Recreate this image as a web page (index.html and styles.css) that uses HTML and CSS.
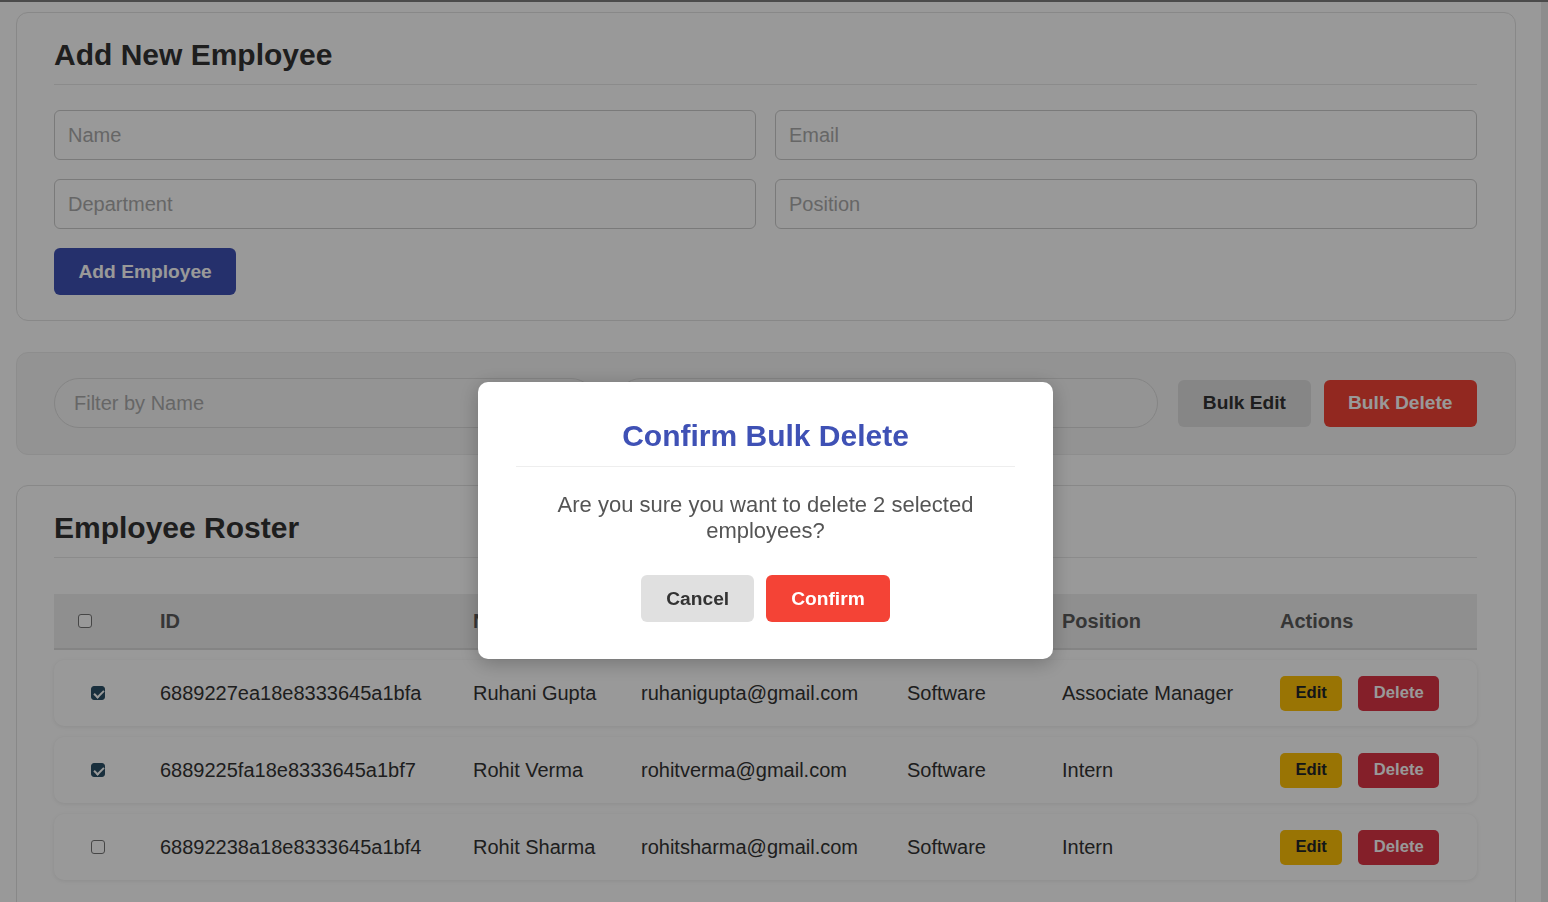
FILE: index.html
```html
<!DOCTYPE html>
<html lang="en">
<head>
<meta charset="utf-8">
<title>Employee Manager</title>
<link rel="stylesheet" href="styles.css">
</head>
<body>
<div class="topbar"></div>
<div class="shell">
  <main class="main">
    <section class="card form-card">
      <h2 class="card-title">Add New Employee</h2>
      <div class="form-grid">
        <input class="field" type="text" placeholder="Name">
        <input class="field" type="text" placeholder="Email">
        <input class="field" type="text" placeholder="Department">
        <input class="field" type="text" placeholder="Position">
      </div>
      <button class="btn btn-primary" type="button">Add Employee</button>
    </section>

    <section class="filter-card">
      <input class="pill" type="text" placeholder="Filter by Name">
      <input class="pill" type="text" placeholder="Filter by Department">
      <div class="bulk-group">
        <button class="btn btn-light" type="button">Bulk Edit</button>
        <button class="btn btn-danger" type="button">Bulk Delete</button>
      </div>
    </section>

    <section class="card roster-card">
      <h2 class="card-title">Employee Roster</h2>
      <div class="table">
        <div class="thead">
          <div class="cell cell-check-head"><input type="checkbox" class="cb"></div>
          <div class="cell">ID</div>
          <div class="cell">Name</div>
          <div class="cell">Email</div>
          <div class="cell">Department</div>
          <div class="cell">Position</div>
          <div class="cell">Actions</div>
        </div>
        <div class="trow">
          <div class="cell cell-check"><input type="checkbox" class="cb" checked></div>
          <div class="cell">6889227ea18e8333645a1bfa</div>
          <div class="cell">Ruhani Gupta</div>
          <div class="cell">ruhanigupta@gmail.com</div>
          <div class="cell">Software</div>
          <div class="cell">Associate Manager</div>
          <div class="cell actions"><button class="sbtn sbtn-edit" type="button">Edit</button><button class="sbtn sbtn-del" type="button">Delete</button></div>
        </div>
        <div class="trow">
          <div class="cell cell-check"><input type="checkbox" class="cb" checked></div>
          <div class="cell">6889225fa18e8333645a1bf7</div>
          <div class="cell">Rohit Verma</div>
          <div class="cell">rohitverma@gmail.com</div>
          <div class="cell">Software</div>
          <div class="cell">Intern</div>
          <div class="cell actions"><button class="sbtn sbtn-edit" type="button">Edit</button><button class="sbtn sbtn-del" type="button">Delete</button></div>
        </div>
        <div class="trow">
          <div class="cell cell-check"><input type="checkbox" class="cb"></div>
          <div class="cell">68892238a18e8333645a1bf4</div>
          <div class="cell">Rohit Sharma</div>
          <div class="cell">rohitsharma@gmail.com</div>
          <div class="cell">Software</div>
          <div class="cell">Intern</div>
          <div class="cell actions"><button class="sbtn sbtn-edit" type="button">Edit</button><button class="sbtn sbtn-del" type="button">Delete</button></div>
        </div>
      </div>
    </section>
  </main>
  <div class="track"></div>
</div>

<div class="overlay">
  <div class="modal">
    <h3 class="modal-title">Confirm Bulk Delete</h3>
    <p class="modal-text">Are you sure you want to delete 2 selected employees?</p>
    <div class="modal-actions">
      <button class="btn btn-cancel" type="button">Cancel</button>
      <button class="btn btn-confirm" type="button">Confirm</button>
    </div>
  </div>
</div>
</body>
</html>
```

FILE: styles.css
```css
* { box-sizing: border-box; }

html, body {
  margin: 0;
  padding: 0;
  height: 902px;
  overflow: hidden;
}

body {
  font-family: "Liberation Sans", Arial, sans-serif;
  color: #333;
  background: #ffffff;
}

.topbar {
  height: 2px;
  background: #7d7d7d;
}

.shell {
  display: flex;
  align-items: stretch;
  min-height: 900px;
}

.main {
  flex: 1;
  padding-top: 10px;
}

.track {
  width: 7px;
  background: #ececec;
}

.card {
  width: 1500px;
  margin-left: 16px;
  background: #ffffff;
  border: 1px solid #e3e3e3;
  border-radius: 12px;
  padding: 20px 38px 25px 37px;
}

.card-title {
  margin: 0 0 25px;
  font-size: 30px;
  line-height: 34px;
  font-weight: bold;
  color: #333;
  padding-top: 5px;
  padding-bottom: 12px;
  border-bottom: 1px solid #e8e8e8;
}

.form-grid {
  display: grid;
  grid-template-columns: 1fr 1fr;
  gap: 19px 19px;
  margin-bottom: 19px;
}

.field {
  height: 50px;
  border: 1px solid #cccccc;
  border-radius: 6px;
  padding: 0 13px;
  font-family: inherit;
  font-size: 20px;
  color: #333;
  background: #ffffff;
  outline: none;
}

.field::placeholder, .pill::placeholder {
  color: #ababab;
}

.btn {
  height: 47px;
  padding: 0 24.5px;
  border: none;
  border-radius: 6px;
  font-family: inherit;
  font-size: 19.2px;
  font-weight: bold;
  cursor: pointer;
}

.btn-primary {
  background: #3f51b5;
  color: #ffffff;
}

.filter-card {
  width: 1500px;
  margin: 31px 0 30px 16px;
  background: #f5f5f5;
  border: 1px solid #ececec;
  border-radius: 12px;
  padding: 25px 38px 26px 37px;
  display: flex;
  align-items: center;
  gap: 20px;
}

.pill {
  flex: 1;
  min-width: 0;
  height: 50px;
  border: 1px solid #dddddd;
  border-radius: 25px;
  padding: 0 19px;
  font-family: inherit;
  font-size: 20px;
  background: #f7f7f7;
  outline: none;
}

.bulk-group {
  display: flex;
  gap: 13px;
}

.btn-light {
  background: #e0e0e0;
  color: #333;
}

.btn-danger {
  background: #f44336;
  color: #ffffff;
}

.roster-card {
  padding-bottom: 40px;
}

.table {
  margin-top: 36px;
  display: flex;
  flex-direction: column;
  gap: 10px;
}

.thead, .trow {
  display: grid;
  grid-template-columns: 90px 313px 168px 266px 155px 218px 213px;
  align-items: center;
}

.thead {
  height: 56px;
  background: #eeeeee;
  border-bottom: 2px solid #dcdcdc;
  font-size: 20px;
  font-weight: bold;
  color: #5a5a5a;
}

.trow {
  height: 66px;
  background: #ffffff;
  border-radius: 10px;
  box-shadow: 0 1px 4px rgba(0, 0, 0, 0.08);
  font-size: 20px;
  color: #333;
}

.trow + .trow {
  margin-top: 1px;
}

.cell {
  padding-left: 16px;
  white-space: nowrap;
}

.cell-check-head {
  padding-left: 24px;
  display: flex;
  align-items: center;
}

.cell-check {
  padding-left: 0;
  padding-right: 2px;
  display: flex;
  justify-content: center;
  align-items: center;
}

.cb {
  appearance: none;
  -webkit-appearance: none;
  width: 14px;
  height: 14px;
  margin: 0;
  border: 1px solid #767676;
  border-radius: 3px;
  background: #ffffff;
  position: relative;
}

.cb:checked {
  background: #2b4f66;
  border-color: #2b4f66;
}

.cb:checked::after {
  content: "";
  position: absolute;
  left: 3.5px;
  top: 0.5px;
  width: 4px;
  height: 8px;
  border: solid #ffffff;
  border-width: 0 2px 2px 0;
  transform: rotate(45deg);
}

.actions {
  display: flex;
  gap: 16px;
  align-items: center;
}

.sbtn {
  height: 35px;
  padding: 0 15.5px;
  border: none;
  border-radius: 5px;
  font-family: inherit;
  font-size: 16.6px;
  font-weight: bold;
}

.sbtn-edit {
  background: #ffc107;
  color: #212529;
}

.sbtn-del {
  background: #dc3545;
  color: #ffffff;
}

.overlay {
  position: fixed;
  inset: 0;
  background: rgba(0, 0, 0, 0.4);
  display: flex;
  justify-content: center;
  align-items: flex-start;
  padding-top: 382px;
  padding-right: 17px;
}

.modal {
  width: 575px;
  background: #ffffff;
  border-radius: 10px;
  padding: 37px 38px 37px;
  box-shadow: 0 4px 20px rgba(0, 0, 0, 0.25);
  text-align: center;
}

.modal-title {
  margin: 0 0 25px;
  font-size: 30px;
  line-height: 34px;
  font-weight: bold;
  color: #3f51b5;
  padding-bottom: 13px;
  border-bottom: 1px solid #eeeeee;
}

.modal-text {
  margin: 0 0 32px;
  font-size: 22px;
  line-height: 25.5px;
  color: #555;
}

.modal-actions {
  display: flex;
  justify-content: center;
  gap: 12px;
}

.btn-cancel {
  background: #e0e0e0;
  color: #333;
  padding: 0 25px;
}

.btn-confirm {
  background: #f44336;
  color: #ffffff;
  padding: 0 25px;
}
```
